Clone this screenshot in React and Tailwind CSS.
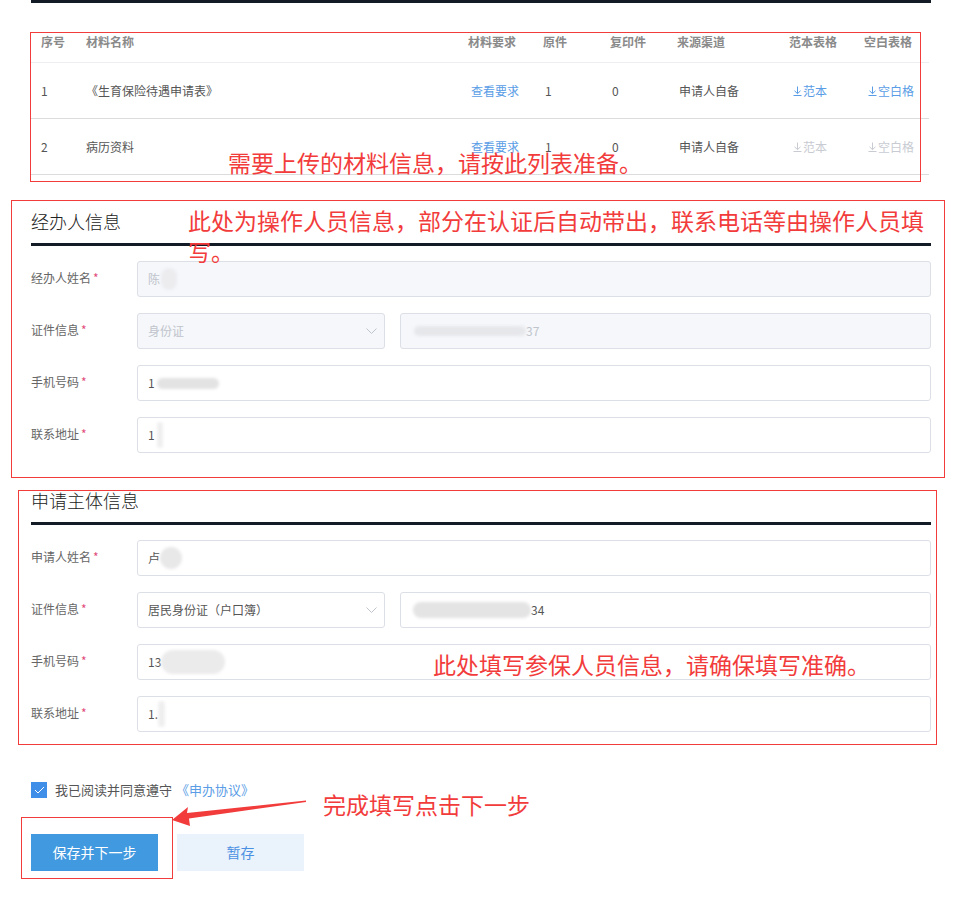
import clsx from 'clsx'

const materials = [
  { no: 1, name: '《生育保险待遇申请表》', hasForm: true },
  { no: 2, name: '病历资料', hasForm: false },
]

const cols = 'grid grid-cols-[45px_382px_75px_67px_67px_112px_75px_75px]'

function DownIcon() {
  return (
    <svg width="9" height="10" viewBox="0 0 9 10" className="inline-block mr-[1px] -mt-[2px]">
      <path d="M4.5 0.5 V7.5 M1.5 4.8 L4.5 7.6 L7.5 4.8 M0.5 9.5 H8.5" fill="none" stroke="currentColor" strokeWidth="1" />
    </svg>
  )
}

function Blob({ className }) {
  return <span className={clsx('inline-block rounded-full blur-[1.5px]', className)} />
}

function Box({ disabled, className, children }) {
  return (
    <div
      className={clsx(
        'h-[36px] border border-[#dcdfe6] rounded-[3px] flex items-center pl-[10px] text-[12px]',
        disabled ? 'bg-[#f5f7fa] text-[#c0c4cc]' : 'bg-white text-[#555]',
        className
      )}
    >
      {children}
    </div>
  )
}

function Chevron() {
  return (
    <svg width="11" height="6" viewBox="0 0 11 6" className="ml-auto mr-[7px]">
      <polyline points="0.5,0.5 5.5,5.5 10.5,0.5" fill="none" stroke="#c0c4cc" strokeWidth="1" />
    </svg>
  )
}

function Field({ label, children }) {
  return (
    <div className="flex items-center h-[36px]">
      <div className="w-[106px] text-[12px] text-[#666] -mt-[3px]">
        {label}
        <span className="text-[#e24d7c] ml-[2px]">*</span>
      </div>
      <div className="flex-1 flex gap-[15px]">{children}</div>
    </div>
  )
}

function SectionTitle({ children }) {
  return (
    <>
      <div className="text-[18px] leading-[24px] font-light text-[#222] pb-[10px]">{children}</div>
      <div className="h-[3px] bg-[#131b26]" />
    </>
  )
}

export default function App() {
  return (
    <div className="relative w-[953px] h-[901px] bg-white overflow-hidden font-['Noto_Sans_CJK_SC','Liberation_Sans',sans-serif]">
      <div className="ml-[31px] w-[900px]">
        <div className="h-[3px] bg-[#131b26]" />

        {/* materials table */}
        <div className="mt-[29px] w-[898px] text-[12px]">
          <div className={clsx(cols, 'leading-[20px] pb-[10px] font-bold text-[#8a8a8a] border-b border-[#eeeef2]')}>
            <div className="pl-[10px]">序号</div>
            <div className="pl-[10px]">材料名称</div>
            <div className="pl-[10px]">材料要求</div>
            <div className="pl-[10px]">原件</div>
            <div className="pl-[10px]">复印件</div>
            <div className="pl-[10px]">来源渠道</div>
            <div className="pl-[10px]">范本表格</div>
            <div className="pl-[10px]">空白表格</div>
          </div>
          {materials.map((m) => (
            <div key={m.no} className={clsx(cols, 'h-[56px] items-center text-[#555] border-b border-[#dcdcdc]')}>
              <div className="pl-[10px]">{m.no}</div>
              <div className="pl-[10px]">{m.name}</div>
              <div className="pl-[13px] text-[#5a9de6]">查看要求</div>
              <div className="pl-[12px]">1</div>
              <div className="pl-[12px]">0</div>
              <div className="pl-[12px]">申请人自备</div>
              <div className={clsx('pl-[14px]', m.hasForm ? 'text-[#5a9de6]' : 'text-[#c8cbd2]')}>
                <DownIcon />范本
              </div>
              <div className={clsx('pl-[14px]', m.hasForm ? 'text-[#5a9de6]' : 'text-[#c8cbd2]')}>
                <DownIcon />空白格
              </div>
            </div>
          ))}
        </div>

        {/* operator */}
        <div className="mt-[34px]">
          <SectionTitle>经办人信息</SectionTitle>
          <div className="mt-[15px] flex flex-col gap-[16px]">
            <Field label="经办人姓名">
              <Box disabled className="flex-1">
                陈<Blob className="w-[16px] h-[22px] bg-[#ececef] ml-[1px]" />
              </Box>
            </Field>
            <Field label="证件信息">
              <Box disabled className="w-[248px]">
                身份证
                <Chevron />
              </Box>
              <Box disabled className="flex-1 pl-[13px]">
                <Blob className="w-[112px] h-[10px] bg-[#e6e7ea]" />
                37
              </Box>
            </Field>
            <Field label="手机号码">
              <Box className="flex-1">
                1<Blob className="w-[62px] h-[11px] bg-[#e3e3e3] ml-[2px]" />
              </Box>
            </Field>
            <Field label="联系地址">
              <Box className="flex-1">
                1<Blob className="w-[6px] h-[26px] bg-[#efefef] ml-[2px]" />
              </Box>
            </Field>
          </div>
        </div>

        {/* applicant */}
        <div className="mt-[35px]">
          <SectionTitle>申请主体信息</SectionTitle>
          <div className="mt-[15px] flex flex-col gap-[16px]">
            <Field label="申请人姓名">
              <Box className="flex-1">
                卢<Blob className="w-[22px] h-[22px] bg-[#e8e8e8]" />
              </Box>
            </Field>
            <Field label="证件信息">
              <Box className="w-[248px]">
                居民身份证（户口簿）
                <Chevron />
              </Box>
              <Box className="flex-1 pl-[12px]">
                <Blob className="w-[118px] h-[16px] bg-[#e4e4e4]" />
                34
              </Box>
            </Field>
            <Field label="手机号码">
              <Box className="flex-1">
                13<Blob className="w-[64px] h-[24px] bg-[#ebebeb]" />
              </Box>
            </Field>
            <Field label="联系地址">
              <Box className="flex-1">
                1.<Blob className="w-[7px] h-[26px] bg-[#efefef]" />
              </Box>
            </Field>
          </div>
        </div>

        {/* agreement */}
        <div className="mt-[50px] flex items-center h-[16px] text-[13px]">
          <span className="w-[16px] h-[16px] bg-[#3f8fe8] flex items-center justify-center">
            <svg width="11" height="8" viewBox="0 0 11 8">
              <polyline points="1,4 4,7 10,1" fill="none" stroke="white" strokeWidth="1" />
            </svg>
          </span>
          <span className="ml-[8px] text-[#555]">我已阅读并同意遵守</span>
          <span className="ml-[4px] text-[#5a9de6]">《申办协议》</span>
        </div>

        <div className="mt-[36px] flex gap-[19px]">
          <button className="w-[127px] h-[37px] bg-[#4199df] text-white text-[14px]">保存并下一步</button>
          <button className="w-[127px] h-[37px] bg-[#eaf2fb] text-[#4a90e2] text-[14px]">暂存</button>
        </div>
      </div>

      {/* annotations */}
      <div className="absolute left-[30px] top-[32px] w-[891px] h-[150px] border border-[#f23c3c]" />
      <div className="absolute left-[11px] top-[200px] w-[934px] h-[278px] border border-[#f23c3c]" />
      <div className="absolute left-[18px] top-[490px] w-[919px] h-[255px] border border-[#f23c3c]" />
      <div className="absolute left-[21px] top-[817px] w-[152px] h-[62px] border border-[#f23c3c]" />

      <div className="absolute left-[228px] top-[147px] text-[23px] leading-[31px] text-[#f23c3c] whitespace-nowrap">
        需要上传的材料信息，请按此列表准备。
      </div>
      <div className="absolute left-[188px] top-[205px] w-[745px] text-[23px] leading-[31px] text-[#f23c3c]">
        此处为操作人员信息，部分在认证后自动带出，联系电话等由操作人员填写。
      </div>
      <div className="absolute left-[433px] top-[649px] text-[23px] leading-[31px] text-[#f23c3c] whitespace-nowrap">
        此处填写参保人员信息，请确保填写准确。
      </div>
      <div className="absolute left-[323px] top-[789px] text-[23px] leading-[31px] text-[#f23c3c] whitespace-nowrap">
        完成填写点击下一步
      </div>

      <svg className="absolute left-[160px] top-[795px]" width="150" height="35" viewBox="160 795 150 35">
        <polygon
          points="172,820 188,807 187,813 306,800.5 306,802 189,818.5 190,826"
          fill="#f23c3c"
        />
      </svg>
    </div>
  )
}
